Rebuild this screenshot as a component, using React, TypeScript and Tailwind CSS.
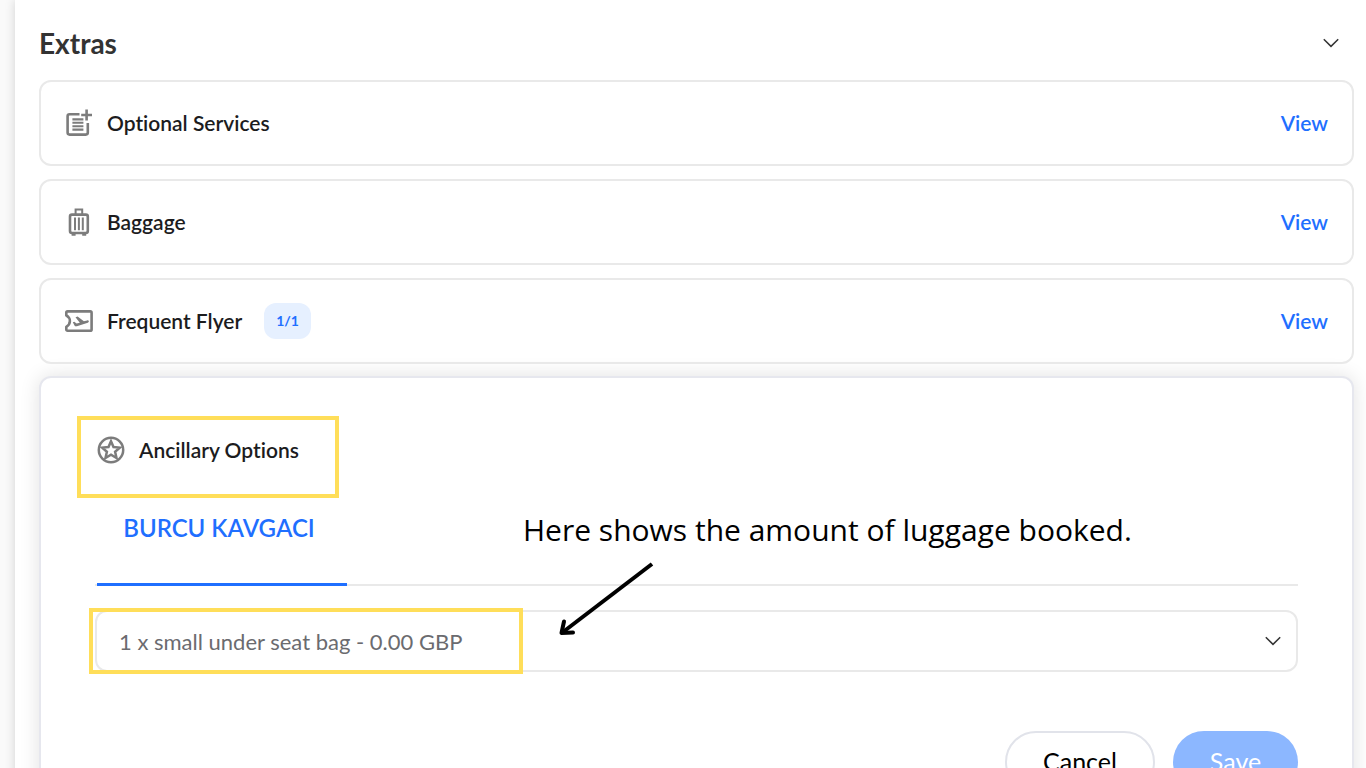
import type { ReactNode } from "react";

interface ExtraItem {
  id: string;
  title: string;
  icon: ReactNode;
  badge?: string;
}

function OptionalServicesIcon() {
  return (
    <svg viewBox="0 0 28 28" className="h-7 w-7 shrink-0" fill="none" stroke="currentColor" strokeWidth="2.6" aria-hidden="true">
      <path d="M14.5 5.2H4.6a2 2 0 0 0-2 2v16.4a2 2 0 0 0 2 2h16.2a2 2 0 0 0 2-2V14" />
      <path d="M21.6 .6v11M16.2 6h10.8" />
      <path d="M7.4 10.4h11M7.4 13.8h11M7.4 17.2h11M7.4 20.6h11" strokeWidth="2.1" />
    </svg>
  );
}

function BaggageIcon() {
  return (
    <svg viewBox="0 0 28 28" className="h-7 w-7 shrink-0" fill="none" stroke="currentColor" strokeWidth="2" aria-hidden="true">
      <path d="M10.6 6V1.6h6.6V6" />
      <rect x="5" y="6.6" width="17.8" height="18.4" rx="2" strokeWidth="2.6" />
      <path d="M10 9.4v12.8M13.9 9.4v12.8M17.8 9.4v12.8" />
      <path d="M6.6 26.8h4M17.2 26.8h4" />
    </svg>
  );
}

function TicketIcon() {
  return (
    <svg viewBox="0 0 28 28" className="h-7 w-7 shrink-0" fill="none" stroke="currentColor" strokeWidth="2.6" strokeLinejoin="round" aria-hidden="true">
      <path d="M2.5 4.4h22.7a1.4 1.4 0 0 1 1.4 1.4v16.6a1.4 1.4 0 0 1-1.4 1.4H2.5a1.2 1.2 0 0 1-1.2-1.2v-2.8c4.8-2.8 4.8-8.6 0-11.4V5.6a1.2 1.2 0 0 1 1.2-1.2z" />
      <path
        d="M7.8 15.2l1.5-.4 2.3 1.8 3.2-.9-4.3-5.5 2.1-.6 6.3 4.6 3.2-.8c1.9-.4 2.5 1.8.7 2.4l-10.9 3.4c-1.2.4-1.9.1-2.4-.8z"
        fill="currentColor"
        stroke="none"
      />
    </svg>
  );
}

function StarIcon() {
  return (
    <svg viewBox="0 0 28 28" className="h-7 w-7 shrink-0" fill="none" stroke="currentColor" strokeWidth="2.5" aria-hidden="true">
      <circle cx="14" cy="14" r="12.2" />
      <path d="M14 5.2l2.5 5.8 6.3.6-4.7 4.2 1.4 6.2-5.5-3.3-5.5 3.3 1.4-6.2-4.7-4.2 6.3-.6z" />
    </svg>
  );
}

function Chevron() {
  return (
    <svg viewBox="0 0 18 10" className="h-2.5 w-[18px]" fill="none" stroke="#333" strokeWidth="1.5" aria-hidden="true">
      <path d="M1.8 1.2L9 8.4l7.2-7.2" />
    </svg>
  );
}

const extras: ExtraItem[] = [
  { id: "optional", title: "Optional Services", icon: <OptionalServicesIcon /> },
  { id: "baggage", title: "Baggage", icon: <BaggageIcon /> },
  { id: "flyer", title: "Frequent Flyer", icon: <TicketIcon />, badge: "1/1" },
];

function ExtraCard({ item }: { item: ExtraItem }) {
  return (
    <li className="flex h-[86px] items-center rounded-xl border-2 border-[#e9e9e9] px-6">
      <span className="text-[#7c7c7c]">{item.icon}</span>
      <h3 className="ml-3.5 text-[21px] font-semibold text-[#1c1c1e]">{item.title}</h3>
      {item.badge && (
        <span className="ml-[22px] rounded-xl bg-[#e6f0ff] px-3 py-2 text-sm leading-5 font-bold text-[#1f6fff]">
          {item.badge}
        </span>
      )}
      <button type="button" className="ml-auto text-[21px] font-semibold text-[#1f6fff]">
        View
      </button>
    </li>
  );
}

export default function App() {
  return (
    <div className="h-screen overflow-hidden bg-[#fafafa] pl-[15px] font-[Lato,'Noto_Sans',sans-serif] [font-variant-ligatures:none]">
      <main className="min-h-full bg-white pr-3 pl-6 shadow-[0_0_10px_rgba(0,0,0,0.16)]">
        <header className="flex h-20 items-center justify-between pt-1.5 pr-3.5">
          <h2 className="text-[28px] leading-8 font-bold text-[#333]">Extras</h2>
          <button type="button" aria-label="Collapse extras">
            <Chevron />
          </button>
        </header>

        <ul className="flex flex-col gap-[13px]">
          {extras.map((item) => (
            <ExtraCard key={item.id} item={item} />
          ))}
        </ul>

        {/* Expanded item */}
        <section className="mt-3 rounded-xl border-2 border-[#e6e7ee] bg-white px-[54px] pt-[58px] pb-10 shadow-[0_0_20px_rgba(0,0,0,0.12)]">
          <div className="relative ml-0.5 flex w-fit items-center text-[#7c7c7c]">
            <StarIcon />
            <h3 className="ml-3.5 text-[21px] leading-7 font-semibold text-[#1c1c1e]">Ancillary Options</h3>
            <span className="pointer-events-none absolute -top-5 -right-10 -bottom-[34px] -left-5 border-4 border-[#ffde59]" />
          </div>

          <div className="relative mt-8">
            <div role="tablist" className="flex border-b-2 border-[#e9e9e9]">
              <button
                type="button"
                role="tab"
                aria-selected="true"
                className="-mb-0.5 ml-0.5 h-[90px] w-[250px] border-b-3 border-[#1f6fff] pr-1.5 pb-6 text-2xl font-semibold text-[#1f6fff]"
              >
                BURCU KAVGACI
              </button>
            </div>

            {/* Callout */}
            <p className="absolute top-3.5 left-[428px] font-['Open_Sans',sans-serif] text-[30px] leading-10 whitespace-nowrap text-black">
              Here shows the amount of luggage booked.
            </p>
            <svg
              viewBox="0 0 100 80"
              className="pointer-events-none absolute top-[63px] left-[460px] z-10 h-20 w-[100px]"
              fill="none"
              stroke="#000"
              strokeWidth="4"
              aria-hidden="true"
            >
              <path d="M97 5L8 73" />
              <path d="M9 62.5L6.500 74L18 73.500" strokeLinecap="round" strokeLinejoin="round" />
            </svg>
          </div>

          <div className="relative mt-6">
            <select
              aria-label="Luggage option"
              className="block h-[62px] w-full appearance-none rounded-xl border-2 border-[#e9e9e9] bg-white px-[22px] text-[22px] text-[#6b6b6f]"
            >
              <option>1 x small under seat bag - 0.00 GBP</option>
            </select>
            <span className="pointer-events-none absolute inset-y-0 right-4 flex items-center">
              <Chevron />
            </span>
            <span className="pointer-events-none absolute -inset-y-0.5 -left-1.5 w-[434px] border-4 border-[#ffde59]" />
          </div>

          <div className="mt-[59px] flex justify-end gap-[18px]">
            <button type="button" className="h-[62px] w-[150px] rounded-full border-2 border-[#e1e3ea] text-[25px] text-black">
              Cancel
            </button>
            <button type="button" className="h-[62px] w-[125px] rounded-full bg-[#8cb7ff] text-[25px] text-white">
              Save
            </button>
          </div>
        </section>
      </main>
    </div>
  );
}
